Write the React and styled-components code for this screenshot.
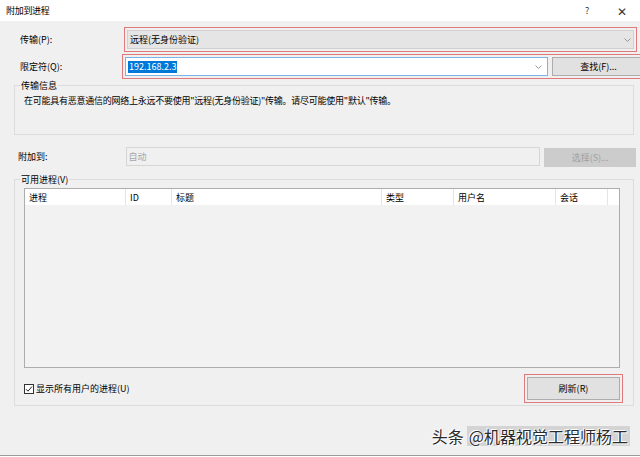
import styled, { createGlobalStyle } from "styled-components"

const GlobalStyle = createGlobalStyle`
  html, body {
    margin: 0;
    padding: 0;
    background: #fff;
  }
  body {
    font-family: "Noto Sans CJK SC", "Noto Sans", sans-serif;
    font-size: 9px;
    color: #000;
  }
`

const Window = styled.div`
  position: relative;
  width: 640px;
  height: 455px;
  background: #f0f0f0;
  border-bottom: 1px solid #9a9a9a;
  display: flex;
  flex-direction: column;
  overflow: hidden;
`

const TitleBar = styled.div`
  height: 21px;
  background: #fff;
  display: flex;
  align-items: center;
  padding: 0 0 0 6px;
  font-size: 9px;
  line-height: 11px;
  letter-spacing: -0.3px;
`

const TitleButtons = styled.div`
  margin-left: auto;
  display: flex;
  align-items: center;
`

const TitleButton = styled.span`
  width: ${(p) => p.w || 30}px;
  text-align: center;
  color: #333;
  font-size: ${(p) => p.size || 9}px;
`

const FieldRow = styled.div`
  display: grid;
  grid-template-columns: ${(p) => p.labelWidth}px 1fr;
  align-items: center;
  padding-left: ${(p) => p.indent || 20}px;
  padding-right: 3px;
  margin-top: ${(p) => p.top || 0}px;
  line-height: 11px;
`

const Highlight = styled.div`
  border: 1px solid #e07a7a;
  height: 23px;
  display: flex;
  align-items: center;
  gap: 4px;
  padding: 0 2px;
`

const Combo = styled.div`
  flex: 1;
  height: 17px;
  background: #e5e5e5;
  border: 1px solid #d0d0d0;
  display: flex;
  align-items: center;
  padding: 0 2px 0 2px;
`

const TextInput = styled.div`
  width: ${(p) => p.width}px;
  height: 17px;
  background: ${(p) => (p.disabled ? "#f0f0f0" : "#fff")};
  border: 1px solid ${(p) => (p.focused ? "#7ab4e8" : "#d6d6d6")};
  display: flex;
  align-items: center;
  padding: 0 5px 0 2px;
  color: ${(p) => (p.disabled ? "#a6a6a6" : "#000")};
`

const Selected = styled.span`
  background: #0078d7;
  color: #fff;
  padding: 0 1px;
  line-height: 12px;
`

const Chevron = () => (
  <svg width="7" height="4" viewBox="0 0 7 4" style={{ marginLeft: "auto" }}>
    <polyline points="0.5,0.5 3.5,3.5 6.5,0.5" fill="none" stroke="#8a8a8a" strokeWidth="0.9" />
  </svg>
)

const Button = styled.div`
  width: ${(p) => p.width || 93}px;
  height: ${(p) => p.height || 19}px;
  box-sizing: border-box;
  background: ${(p) => (p.disabled ? "#cccccc" : "#e1e1e1")};
  border: 1px solid ${(p) => (p.disabled ? "#cccccc" : "#adadad")};
  color: ${(p) => (p.disabled ? "#a0a0a0" : "#000")};
  display: flex;
  align-items: center;
  justify-content: center;
  line-height: 11px;
  margin-left: ${(p) => p.offsetLeft || 0}px;
  margin-top: ${(p) => p.offsetTop || 0}px;
`

const Group = styled.fieldset`
  margin: ${(p) => p.top || 0}px 6px 0 14px;
  padding: ${(p) => p.pad};
  border: 1px solid #dcdcdc;
  min-width: 0;
  height: ${(p) => p.height}px;
  box-sizing: border-box;
  line-height: 11px;
`

const Legend = styled.legend`
  padding: 0 1px;
  margin-left: -4px;
  line-height: 11px;
`

const InfoText = styled.div`
  letter-spacing: -0.25px;
  white-space: nowrap;
`

const AttachRow = styled.div`
  display: flex;
  align-items: center;
  margin: 10px 4px 0 18px;
  line-height: 11px;
`

const AttachLabel = styled.span`
  width: 109px;
`

const ListView = styled.div`
  height: 180px;
  box-sizing: border-box;
  border: 1px solid #adadad;
  background: #f2f2f2;
  margin-right: 3px;
`

const ListHeader = styled.div`
  display: flex;
  height: 16px;
  background: #fff;
`

const Column = styled.div`
  width: ${(p) => p.width}px;
  flex: ${(p) => (p.width ? "none" : 1)};
  box-sizing: border-box;
  padding-left: 4px;
  border-right: ${(p) => (p.width ? "1px solid #e5e5e5" : "none")};
  display: flex;
  align-items: center;
`

const BottomRow = styled.div`
  display: flex;
  align-items: center;
  justify-content: space-between;
  margin-top: 6px;
`

const CheckLabel = styled.label`
  display: flex;
  align-items: center;
  gap: 2px;
`

const CheckBox = styled.span`
  width: 10px;
  height: 10px;
  box-sizing: border-box;
  border: 1px solid #333;
  background: #fff;
  display: flex;
  align-items: center;
  justify-content: center;
`

const RefreshFrame = styled.div`
  border: 1px solid #e07a7a;
  padding: 2px;
`

const Watermark = styled.div`
  position: absolute;
  right: 10px;
  bottom: 9px;
  font-size: 16px;
  line-height: 20px;
  color: #2a2a2a;
  text-shadow: 0 0 1px #fff, 1px 1px 0 #fff, -1px -1px 0 #fff;
  display: flex;
  gap: 3px;
`

const WatermarkTag = styled.span`
  background: rgba(150, 150, 150, 0.3);
  padding: 0 2px;
`

const columns = [
  { label: "进程", width: 101 },
  { label: "ID", width: 46 },
  { label: "标题", width: 210 },
  { label: "类型", width: 72 },
  { label: "用户名", width: 102 },
  { label: "会话", width: 52 },
  { label: "" },
]

export default function App() {
  return (
    <>
      <GlobalStyle />
      <Window>
        <TitleBar>
          附加到进程
          <TitleButtons>
            <TitleButton w={34}>?</TitleButton>
            <TitleButton w={36} size={12}>✕</TitleButton>
          </TitleButtons>
        </TitleBar>

        <FieldRow labelWidth={104} top={6}>
          <span>传输(P):</span>
          <Highlight>
            <Combo>
              远程(无身份验证)
              <Chevron />
            </Combo>
          </Highlight>
        </FieldRow>

        <FieldRow labelWidth={102} top={2}>
          <span>限定符(Q):</span>
          <Highlight>
            <TextInput width={414} focused>
              <Selected>192.168.2.3</Selected>
              <Chevron />
            </TextInput>
            <Button>查找(F)...</Button>
          </Highlight>
        </FieldRow>

        <Group top={1} height={55} pad="4px 9px 0 9px">
          <Legend>传输信息</Legend>
          <InfoText>
            在可能具有恶意通信的网络上永远不要使用"远程(无身份验证)"传输。请尽可能使用"默认"传输。
          </InfoText>
        </Group>

        <AttachRow>
          <AttachLabel>附加到:</AttachLabel>
          <TextInput width={411} disabled>
            自动
          </TextInput>
          <Button disabled width={93} offsetLeft={4} offsetTop={3}>
            选择(S)...
          </Button>
        </AttachRow>

        <Group top={7} height={232} pad="3px 10px 0 9px">
          <Legend>可用进程(V)</Legend>
          <ListView>
            <ListHeader>
              {columns.map((c, i) => (
                <Column key={i} width={c.width}>
                  {c.label}
                </Column>
              ))}
            </ListHeader>
          </ListView>
          <BottomRow>
            <CheckLabel>
              <CheckBox>
                <svg width="8" height="8" viewBox="0 0 8 8">
                  <polyline points="1,4.2 3,6.2 7,1.5" fill="none" stroke="#222" strokeWidth="1" />
                </svg>
              </CheckBox>
              显示所有用户的进程(U)
            </CheckLabel>
            <RefreshFrame>
              <Button width={93} height={23}>刷新(R)</Button>
            </RefreshFrame>
          </BottomRow>
        </Group>

        <Watermark>
          <span>头条</span>
          <WatermarkTag>@机器视觉工程师杨工</WatermarkTag>
        </Watermark>
      </Window>
    </>
  )
}
